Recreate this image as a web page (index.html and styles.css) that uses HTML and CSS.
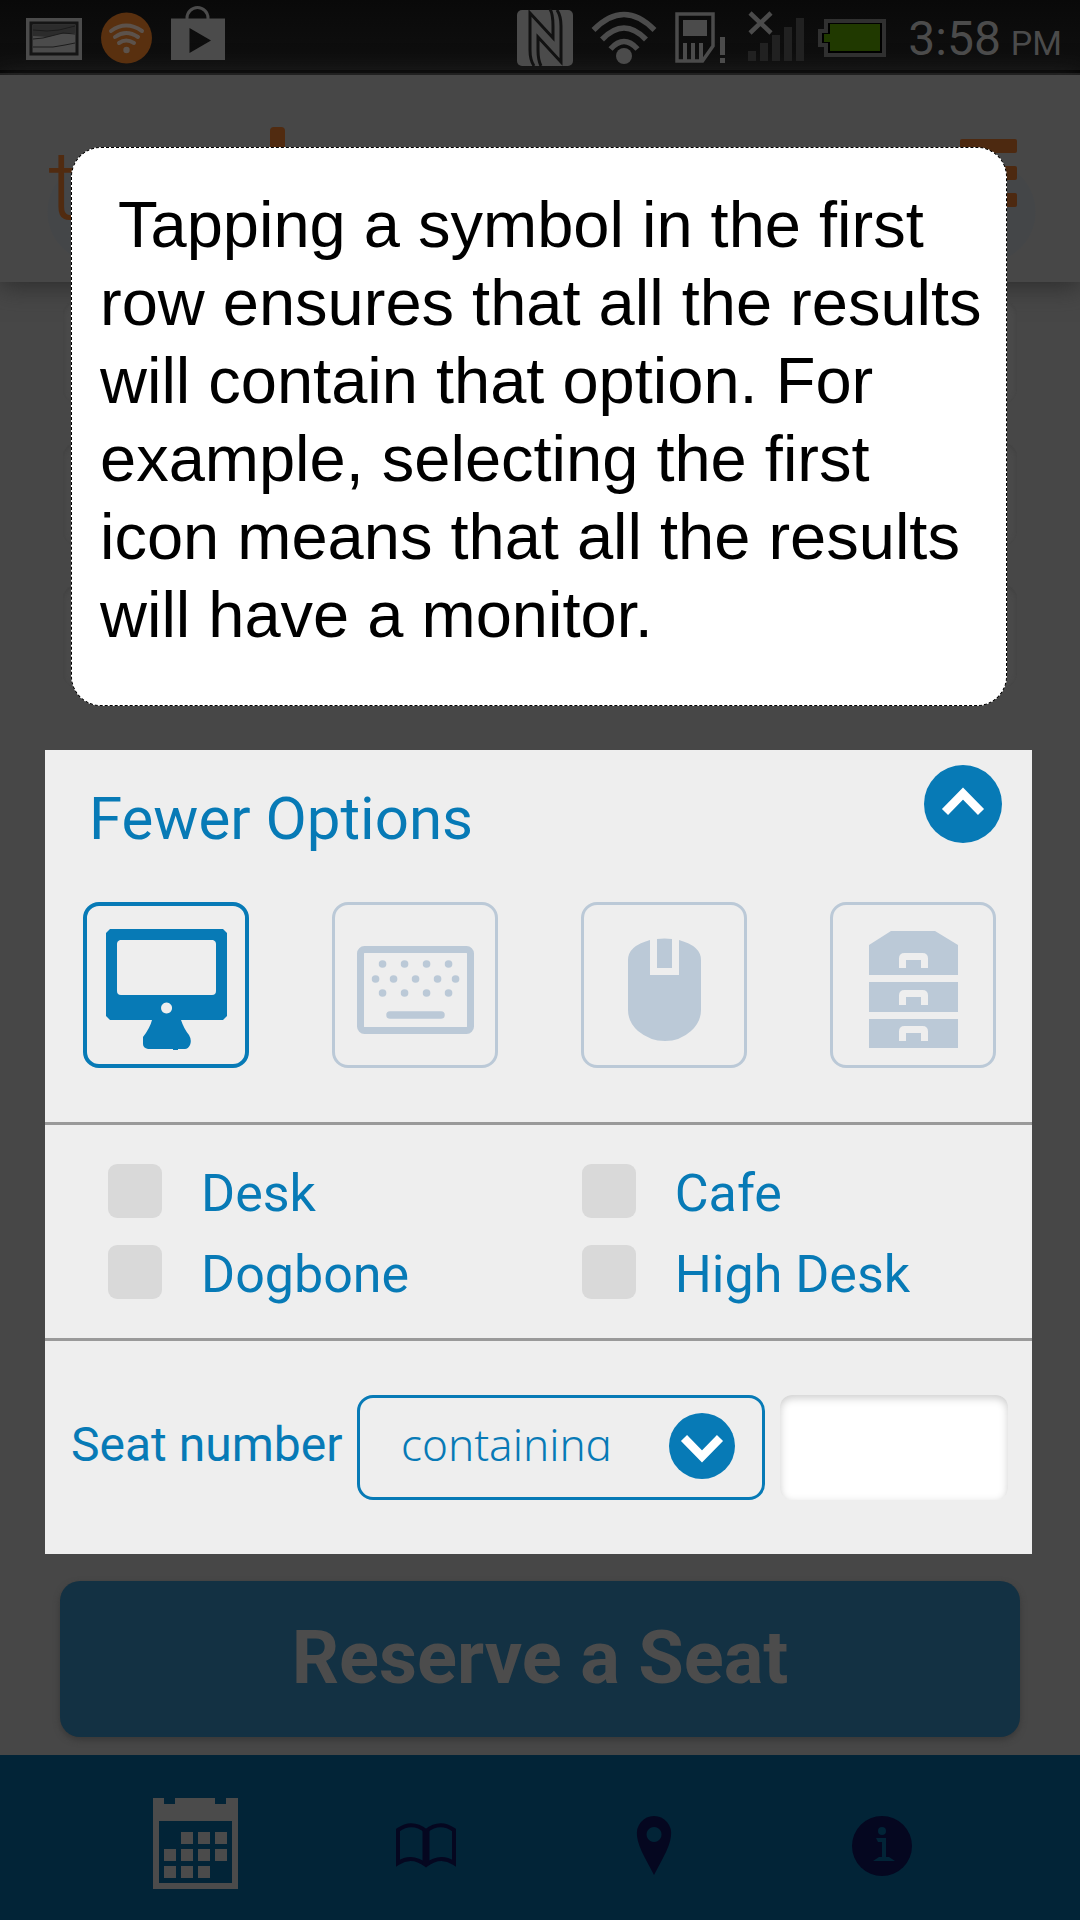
FILE: index.html
```html
<!DOCTYPE html>
<html lang="en">
<head>
<meta charset="utf-8">
<meta name="viewport" content="width=device-width, initial-scale=1">
<title>Find a seat</title>
<link rel="stylesheet" href="styles.css">
</head>
<body>
<div class="status-bar">
  <svg class="status-icon" width="60" height="75" viewBox="24 0 60 75" aria-hidden="true">
    <rect x="26" y="18" width="56" height="42" fill="#4b4b4b"/>
    <rect x="31" y="23" width="46" height="31" fill="#4b4b4b" stroke="#151515" stroke-width="3"/>
    <path d="M33 25h42v8l-17 1-10 3-15-1z" fill="#2c2c2c"/>
    <path d="M33 30l14 1 12-1 16-4M33 39l10-1 20-5 12 1M33 47l20 0 12-2 10-2" fill="none" stroke="#1c1c1c" stroke-width="1"/>
  </svg>
  <svg class="status-icon" width="54" height="75" viewBox="100 0 54 75" aria-hidden="true">
    <circle cx="126.500" cy="38" r="25.500" fill="#59300f"/>
    <path d="M111 31q15-11 31 0M115 37q11-8 23 0M119 43q7-5 15 0" fill="none" stroke="#5c524b" stroke-width="4" stroke-linecap="round"/>
    <circle cx="126.500" cy="50" r="3.200" fill="#5c524b"/>
  </svg>
  <svg class="status-icon" width="56" height="75" viewBox="170 0 56 75" aria-hidden="true">
    <path d="M187 20v-2a10.500 10.500 0 0 1 21 0v2" fill="none" stroke="#4b4b4b" stroke-width="3"/>
    <path d="M171 18.500h54V60h-54zM189.500 28v25L211 40.500z" fill="#4b4b4b" fill-rule="evenodd"/>
  </svg>
  <div class="status-right">
    <svg width="61" height="75" viewBox="517 0 61 75" aria-hidden="true">
      <rect x="519" y="10" width="56" height="56" rx="5" fill="#4b4b4b"/>
      <path d="M536 66Q532 60 532 50V13L555 38V26Q555 14 552 9M559 10Q563 16 563 26V62L540 37V50Q540 60 543 66" fill="none" stroke="#111" stroke-width="3"/>
    </svg>
    <svg width="71" height="75" viewBox="590 0 71 75" aria-hidden="true">
      <path d="M595.500 30q30.500-31 61 0M604 39.500q22-23 44 0M612.500 49q13.500-15 27 0" fill="none" stroke="#4b4b4b" stroke-width="5.500"/>
      <circle cx="626" cy="56" r="8" fill="#4b4b4b"/>
    </svg>
    <svg width="62" height="75" viewBox="673 0 62 75" aria-hidden="true">
      <path d="M679 14h36v32l-10.500 15H679z" fill="none" stroke="#4b4b4b" stroke-width="3.500"/>
      <rect x="685" y="20" width="24" height="16" fill="#4b4b4b"/>
      <path d="M687 43v19M695 43v19M703 43v17" stroke="#4b4b4b" stroke-width="4"/>
      <path d="M724.500 37v18M724.500 58v5" stroke="#4b4b4b" stroke-width="5"/>
    </svg>
    <svg width="61" height="75" viewBox="747 0 61 75" aria-hidden="true">
      <path d="M752 13l21 20M773 13l-21 20" stroke="#4b4b4b" stroke-width="4.500"/>
      <path d="M754 51v10M766 43v18M778 35v26M790 27v34M802 18v43" stroke="#212121" stroke-width="8"/>
    </svg>
    <svg width="70" height="75" viewBox="820 0 70 75" aria-hidden="true">
      <path d="M828 21h58v34h-58v-10h-6V31h6z" fill="#000" stroke="#303030" stroke-width="4"/>
      <path d="M832 24h50v27h-50v-9h-6v-8h6z" fill="#203900"/>
    </svg>
    <time class="clock"><span>3:58</span><span class="clock-period">PM</span></time>
  </div>
</div>

<header class="app-header">
  <a class="logo" href="#" aria-label="Home"><span class="logo-letter">t</span><span class="logo-stem"></span></a>
  <button class="menu-button" type="button" aria-label="Menu"><i></i><i></i><i></i></button>
</header>

<main>
  <div class="search-fields">
    <div class="search-field"></div>
    <div class="search-field"></div>
    <div class="search-field"></div>
  </div>

  <form class="panel">
    <section class="equipment">
      <div class="panel-head">
        <h2>Fewer Options</h2>
        <button class="collapse" type="button" aria-label="Collapse options">
          <svg width="78" height="78" viewBox="0 0 78 78"><path d="M21 47L39 28.500 57 47" fill="none" stroke="#fff" stroke-width="8.500"/></svg>
        </button>
      </div>
      <div class="tiles">
        <button class="tile selected" type="button" aria-label="Monitor" aria-pressed="true">
          <svg width="166" height="166" viewBox="83 902 166 166"><path fill="currentColor" fill-rule="evenodd" d="M110 929h113l4 4v83l-4 4H181q3 9 8 15 3 5 1 10-2 4-5 4h-7v1h-5v-1H148q-5-1-5-5v-7q7-9 9-17H110l-4-4v-83zM120 940q-3 1-3 4v47q0 4 4 4h91q4 0 4-4v-47q0-3-3-4zM166.500 1002.500a5.500 5.500 0 1 0 .1 0z"/></svg>
        </button>
        <button class="tile" type="button" aria-label="Keyboard" aria-pressed="false">
          <svg width="166" height="166" viewBox="332 902 166 166"><rect x="360.500" y="949.500" width="110" height="81" rx="4" fill="none" stroke="currentColor" stroke-width="7"/><path d="M390 1015h51M382.500 964h.1M404.500 964h.1M426.500 964h.1M448.500 964h.1M375.500 979h.1M393.500 979h.1M415.500 979h.1M437.500 979h.1M455.500 979h.1M382.500 993h.1M404.500 993h.1M426.500 993h.1M448.500 993h.1" stroke="currentColor" stroke-width="7.500" stroke-linecap="round"/></svg>
        </button>
        <button class="tile" type="button" aria-label="Mouse" aria-pressed="false">
          <svg width="166" height="166" viewBox="581 902 166 166"><path fill="currentColor" d="M650 940v35h29v-35q22 6 22 20v50q0 12-10 21-11 10-26 10t-27-10q-10-9-10-21v-50q0-14 22-20zM657 939q7.500-1 15 0v29h-15z"/></svg>
        </button>
        <button class="tile" type="button" aria-label="Storage" aria-pressed="false">
          <svg width="166" height="166" viewBox="830 902 166 166"><path fill="currentColor" d="M891 931h44l23 14v30h-89v-30zM869 982h89v30h-89zM869 1019h89v29h-89z"/><path d="M902.500 968v-9.500q0-2 2-2h18q2 0 2 2v9.500M902.500 1005v-9.500q0-2 2-2h18q2 0 2 2v9.500M902.500 1041v-9.500q0-2 2-2h18q2 0 2 2v9.500" fill="none" stroke="#eee" stroke-width="7"/></svg>
        </button>
      </div>
    </section>

    <section class="seat-types">
      <label class="check"><input type="checkbox"><span>Desk</span></label>
      <label class="check"><input type="checkbox"><span>Cafe</span></label>
      <label class="check"><input type="checkbox"><span>Dogbone</span></label>
      <label class="check"><input type="checkbox"><span>High Desk</span></label>
    </section>

    <section class="seat-number">
      <label for="seat">Seat number</label>
      <div class="match">
        <select aria-label="Match">
          <option>containing</option>
        </select>
        <svg class="match-arrow" width="66" height="66" viewBox="0 0 66 66" aria-hidden="true"><circle cx="33" cy="33" r="33" fill="#077ab6"/><path d="M15 25L33 43.500 51 25" fill="none" stroke="#fff" stroke-width="8.500"/></svg>
      </div>
      <input id="seat" type="text">
    </section>
  </form>

  <button class="reserve" type="button">Reserve a Seat</button>
</main>

<nav class="tab-bar">
  <a href="#" aria-label="Calendar"><svg width="96" height="96" viewBox="150 1798 96 96"><path fill="#4b4b4b" fill-rule="evenodd" d="M153 1796h11v6h11v-6h40v6h11v-6h12v91h-85zM159 1819v62h73v-62z" transform="translate(0 2)"/><path fill="#4b4b4b" transform="translate(0 2)" d="M181 1830h12v12h-12zM198 1830h12v12h-12zM215 1830h12v12h-12zM164 1847h12v12h-12zM181 1847h12v12h-12zM198 1847h12v12h-12zM215 1847h12v12h-12zM164 1864h12v12h-12zM181 1864h12v12h-12zM198 1864h12v12h-12z"/></svg></a>
  <a href="#" aria-label="Reservations"><svg width="60" height="60" viewBox="396 1816 60 60"><path d="M398 1863V1830Q412 1820 426 1831Q440 1820 454 1830V1863Q440 1854 426 1865Q412 1854 398 1863z" fill="none" stroke="#050720" stroke-width="4"/><path d="M426 1829v36" stroke="#050720" stroke-width="7"/></svg></a>
  <a href="#" aria-label="Map"><svg width="60" height="60" viewBox="624 1816 60 60"><path fill="#050720" fill-rule="evenodd" d="M654 1816q8 0 13 6t4 14q-1 9-8 22l-9 17-9-17q-7-13-8-22-1-8 4-14t13-6zM654 1827a7.500 7.500 0 1 0 .1 0z"/></svg></a>
  <a href="#" aria-label="Information"><svg width="60" height="60" viewBox="852 1816 60 60"><circle cx="882" cy="1846" r="30" fill="#050720"/><circle cx="882" cy="1831" r="4" fill="#022437"/><path fill="#022437" d="M876 1838h10v19h3l6 4h-22l6-4h3v-15h-4z"/></svg></a>
</nav>

<div class="tooltip" role="tooltip">
  <p> Tapping a symbol in the first row ensures that all the results will contain that option. For example, selecting the first icon means that all the results will have a monitor.</p>
</div>
</body>
</html>
```
FILE: styles.css
```css
* { box-sizing: border-box; }

body {
  margin: 0;
  position: relative;
  background: #474747;
  color: #077ab6;
  font-family: Roboto, "Liberation Sans", sans-serif;
}

button { padding: 0; border: 0; font: inherit; }
svg { display: block; flex: none; }

/* Status bar */
.status-bar {
  display: flex;
  gap: 16px;
  height: 75px;
  padding: 0 18px 0 24px;
  background: linear-gradient(#090909, #101010 70px, #020202 70px, #020202 73px, #1c1c1c 73px);
  color: #4b4b4b;
}
.status-right { display: flex; gap: 12px; margin-left: auto; }
.clock { display: flex; align-items: baseline; gap: 10px; padding-left: 8px; font-size: 48px; line-height: 78px; }
.clock-period { font-size: 34px; }

/* Header */
.app-header {
  display: flex;
  justify-content: space-between;
  align-items: flex-start;
  height: 207px;
  padding: 52px 63px 0 48px;
  background:
    radial-gradient(circle at calc(100% - 95px) 137px, #444648 50px, transparent 51px),
    radial-gradient(circle at 98px 137px, #444648 50px, transparent 51px),
    #474747;
  box-shadow: 0 4px 24px #2c2c2c;
}
.logo { display: flex; color: #512b10; text-decoration: none; }
.logo-letter { width: 222px; font-size: 96px; line-height: 118px; font-weight: 300; }
.logo-stem { width: 15px; height: 90px; border-radius: 4px; background: #512b10; }
.menu-button { display: grid; gap: 13px; width: 57px; margin-top: 12px; background: none; }
.menu-button i { height: 14px; border-radius: 2px; background: #4d2910; }

/* Search fields */
.search-fields { display: grid; gap: 40px; padding: 19px 63px 63px; }
.search-field { height: 102px; border-radius: 14px; background: #494949; box-shadow: inset 0 2px 4px #414141; }

/* Options panel */
.panel { margin: 0 48px 0 45px; background: #eee; }
.equipment { padding: 15px 30px 54px 38px; }
.panel-head { display: flex; justify-content: space-between; align-items: flex-start; padding-left: 6px; }
.panel-head h2 { margin: 19px 0 0; font-size: 60px; line-height: 70px; font-weight: 400; }
.collapse { width: 78px; height: 78px; border-radius: 50%; background: #077ab6; }
.tiles { display: flex; justify-content: space-between; margin: 48px 6px 0 0; }
.tile {
  display: flex;
  align-items: center;
  justify-content: center;
  width: 166px;
  height: 166px;
  border: 3px solid #bbc9d7;
  border-radius: 16px;
  background: none;
  color: #bbc9d7;
}
.tile.selected { border-width: 4px; border-color: #077ab6; color: #077ab6; }

.seat-types {
  display: grid;
  grid-template-columns: 48% 1fr;
  row-gap: 21px;
  padding: 39px 0 33px;
  border-top: 3px solid #999;
  border-bottom: 3px solid #999;
}
.check { display: flex; gap: 39px; height: 60px; padding-left: 63px; font-size: 52px; line-height: 60px; }
.check input { appearance: none; width: 54px; height: 54px; margin: 0; border-radius: 9px; background: #d9d9d9; }

.seat-number {
  display: grid;
  grid-template-columns: 286px 1fr 228px;
  padding: 54px 24px 54px 26px;
}
.seat-number label { font-size: 48px; line-height: 99px; }
.match { position: relative; height: 105px; margin-right: 15px; }
.match select {
  appearance: none;
  width: 100%;
  height: 105px;
  padding: 18px 90px 36px 41px;
  border: 3px solid #077ab6;
  border-radius: 16px;
  background: none;
  color: #077ab6;
  font-family: "Noto Sans", "Open Sans", sans-serif;
  font-size: 44px;
  font-weight: 300;
  line-height: 56px;
}
.match-arrow { position: absolute; top: 18px; right: 30px; pointer-events: none; }
.seat-number input {
  width: 100%;
  height: 105px;
  padding: 0 20px;
  border: 0;
  border-radius: 12px;
  background: #fff;
  box-shadow: inset 0 3px 8px #ccc;
  color: #077ab6;
  font: 48px Roboto, sans-serif;
}

.reserve {
  display: block;
  width: calc(100% - 120px);
  height: 156px;
  margin: 27px 60px 18px;
  padding-bottom: 4px;
  border-radius: 20px;
  background: #133143;
  box-shadow: 0 3px 6px #383838;
  color: #4c4c4c;
  font-size: 74px;
  font-weight: 700;
}

/* Bottom navigation */
.tab-bar { display: grid; grid-template-columns: repeat(4, 1fr); height: 165px; padding: 8px 84px 0; background: #022437; }
.tab-bar a { display: grid; place-items: center; height: 166px; }

/* Help bubble */
.tooltip {
  position: absolute;
  top: 147px;
  left: 71px;
  right: 73px;
  padding: 38px 20px 51px 28px;
  border: 1px dashed #000;
  border-radius: 30px;
  background: #fff;
  color: #000;
  font-family: "Liberation Sans", Arial, sans-serif;
  font-size: 65px;
  line-height: 78px;
}
.tooltip p { margin: 0; white-space: pre-wrap; }
```
